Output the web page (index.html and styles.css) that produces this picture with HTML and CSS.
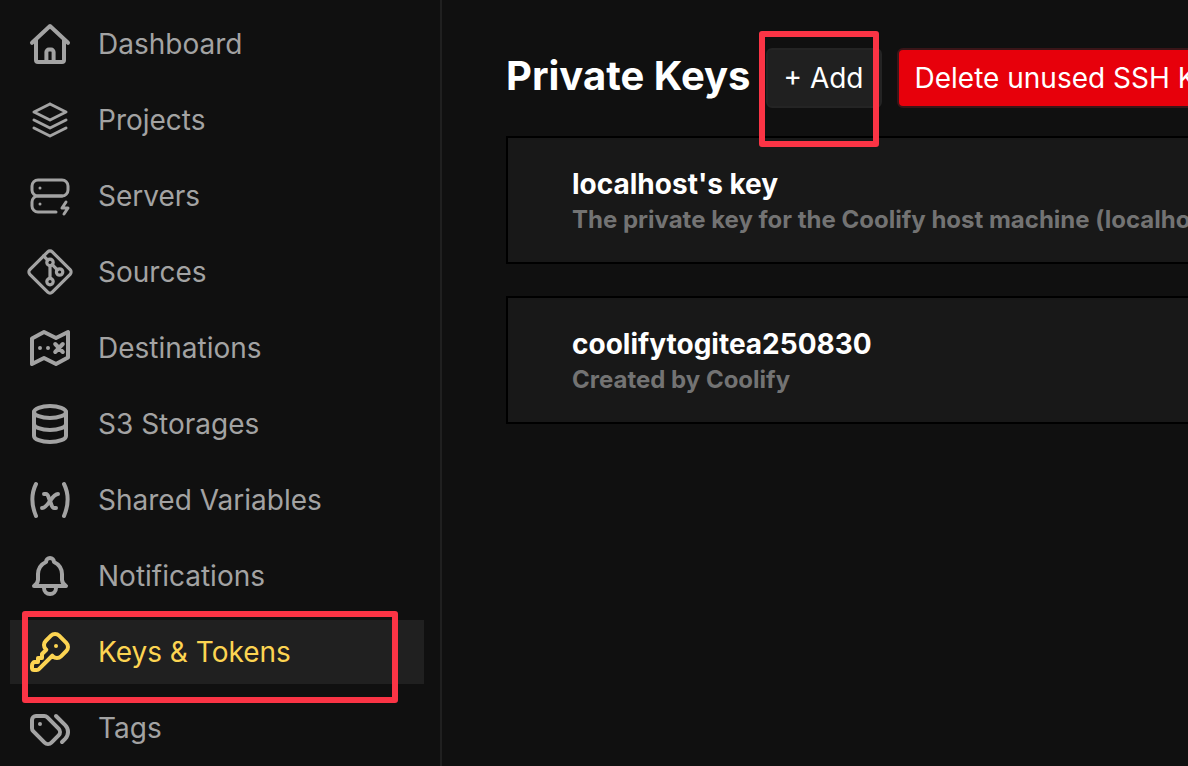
FILE: index.html
```html
<!DOCTYPE html>
<html lang="en">
  <head>
    <meta charset="UTF-8" />
    <meta name="viewport" content="width=device-width, initial-scale=1.0" />
    <title>Private Keys | Coolify</title>
    <link rel="stylesheet" href="styles.css">
  </head>
  <body>
    <aside class="sidebar">
      <nav>
        <ul class="menu">
          <li>
            <a href="#" class="menu-item">
              <svg class="icon" viewBox="0 0 24 24">
                <path d="M3 11.4l9-8.4l9 8.4M5 10v10a1 1 0 0 0 1 1h12a1 1 0 0 0 1-1v-10" />
                <path d="M10.2 21v-5a1.2 1.2 0 0 1 1.2-1.2h1.2a1.2 1.2 0 0 1 1.2 1.2v5" />
              </svg>
              Dashboard
            </a>
          </li>
          <li>
            <a href="#" class="menu-item">
              <svg class="icon icon-thin" viewBox="0 0 24 24">
                <path d="M12 4l-8 4l8 4l8-4l-8-4M4 12l8 4l8-4M4 16l8 4l8-4" />
              </svg>
              Projects
            </a>
          </li>
          <li>
            <a href="#" class="menu-item">
              <svg class="icon icon-thin" viewBox="0 0 24 24">
                <path d="M3 7a3 3 0 0 1 3-3h12a3 3 0 0 1 3 3v2a3 3 0 0 1-3 3h-12a3 3 0 0 1-3-3z" />
                <path d="M15 20h-9a3 3 0 0 1-3-3v-2a3 3 0 0 1 3-3h12M7 8v.01M7 16v.01M20 15l-2 3h3l-2 3" />
              </svg>
              Servers
            </a>
          </li>
          <li>
            <a href="#" class="menu-item">
              <svg class="icon icon-git" viewBox="0 0 15 15">
                <path d="M6.793 1.207L1.207 6.793a1 1 0 0 0 0 1.414l5.586 5.586a1 1 0 0 0 1.414 0l5.586-5.586a1 1 0 0 0 0-1.414L8.207 1.207a1 1 0 0 0-1.414 0z" />
                <path d="M5.5 2.5l1.3 1.3M8.2 5.2l1.6 1.6M7.5 5.5v4" />
                <circle cx="7.5" cy="4.5" r="1" />
                <circle cx="10.5" cy="7.5" r="1" />
                <circle cx="7.5" cy="10.5" r="1" />
              </svg>
              Sources
            </a>
          </li>
          <li>
            <a href="#" class="menu-item">
              <svg class="icon" viewBox="0 0 24 24">
                <path d="M3 7.2l6-3.2l6 3l6-3v12.8l-6 3.2l-6-3l-6 3z" />
                <path d="M7 12v.01M11 12v.01M14.6 10l3.8 4M18.4 10l-3.8 4" />
              </svg>
              Destinations
            </a>
          </li>
          <li>
            <a href="#" class="menu-item">
              <svg class="icon" viewBox="0 0 24 24">
                <ellipse cx="12" cy="6" rx="8" ry="3" />
                <path d="M4 6v6a8 3 0 0 0 16 0v-6M4 12v6a8 3 0 0 0 16 0v-6" />
              </svg>
              S3 Storages
            </a>
          </li>
          <li>
            <a href="#" class="menu-item">
              <svg class="icon" viewBox="0 0 24 24">
                <path d="M5 4c-2.5 5-2.5 10 0 16m14-16c2.5 5 2.5 10 0 16m-10-11h1c1 0 1 1 2.016 3.527c.984 2.473.984 3.473 1.984 3.473h1" />
                <path d="M8 16c1.5 0 3-2 4-3.5s2.5-3.5 4-3.5" />
              </svg>
              Shared Variables
            </a>
          </li>
          <li>
            <a href="#" class="menu-item">
              <svg class="icon" viewBox="0 0 24 24">
                <path d="M10 5a2 2 0 1 1 4 0a7 7 0 0 1 4 6v3a4 4 0 0 0 2 3h-16a4 4 0 0 0 2-3v-3a7 7 0 0 1 4-6M9 17v1a3 3 0 0 0 6 0v-1" />
              </svg>
              Notifications
            </a>
          </li>
          <li>
            <a href="#" class="menu-item menu-item-active">
              <svg class="icon" viewBox="0 0 24 24">
                <path d="M16.555 3.843l3.602 3.602a2.877 2.877 0 0 1 0 4.069l-2.643 2.643a2.877 2.877 0 0 1-4.069 0l-.301-.301l-6.558 6.558a2 2 0 0 1-1.239.578l-.175.008h-1.172a1 1 0 0 1-.993-.883l-.007-.117v-1.172a2 2 0 0 1 .467-1.284l.119-.13l.414-.414h2v-2h2v-2l2.144-2.144l-.301-.301a2.877 2.877 0 0 1 0-4.069l2.643-2.643a2.877 2.877 0 0 1 4.069 0zM15 9h.01" />
              </svg>
              Keys &amp; Tokens
              <span class="marker marker-menu"></span>
            </a>
          </li>
          <li>
            <a href="#" class="menu-item">
              <svg class="icon" viewBox="0 0 24 24">
                <path d="M3 8v4.172a2 2 0 0 0 .586 1.414l5.71 5.71a2.41 2.41 0 0 0 3.408 0l3.592-3.592a2.41 2.41 0 0 0 0-3.408l-5.71-5.71a2 2 0 0 0-1.414-.586h-4.172a2 2 0 0 0-2 2z" />
                <path d="M18 19l1.592-1.592a4.82 4.82 0 0 0 0-6.816l-4.592-4.592M7 10h-.01" />
              </svg>
              Tags
            </a>
          </li>
        </ul>
      </nav>
    </aside>
    <main>
      <div class="page-header">
        <h1>Private Keys</h1>
        <div class="add-wrap">
          <button type="button" class="btn">+ Add</button>
          <span class="marker marker-add"></span>
        </div>
        <button type="button" class="btn btn-danger">Delete unused SSH Keys</button>
      </div>
      <div class="key-list">
        <a href="#" class="card">
          <span class="card-title">localhost's key</span>
          <span class="card-text">The private key for the Coolify host machine (localhost).</span>
        </a>
        <a href="#" class="card">
          <span class="card-title">coolifytogitea250830</span>
          <span class="card-text">Created by Coolify</span>
        </a>
      </div>
    </main>
  </body>
</html>
```

FILE: styles.css
```css
* {
  box-sizing: border-box;
}

body {
  margin: 0;
  height: 100vh;
  display: flex;
  overflow: hidden;
  background-color: #101010;
  color: #fff;
  font-family: Inter, sans-serif;
  font-size: 28px;
}

a {
  color: inherit;
  text-decoration: none;
}

/* Sidebar */
.sidebar {
  flex: 0 0 442px;
  padding: 12px 16px 12px 10px;
  border-right: 2px solid #202020;
}

.menu {
  list-style: none;
  margin: 0;
  padding: 0;
  display: flex;
  flex-direction: column;
  gap: 12px;
}

.menu-item {
  position: relative;
  display: flex;
  align-items: center;
  gap: 24px;
  height: 64px;
  padding: 0 16px;
  color: #a3a3a3;
}

.menu-item-active {
  background-color: #202020;
  color: #fcd452;
}

.icon {
  flex: none;
  width: 48px;
  height: 48px;
  fill: none;
  stroke: currentColor;
  stroke-width: 2;
  stroke-linecap: round;
  stroke-linejoin: round;
}

.icon-thin {
  stroke-width: 1.5;
}

.icon-git {
  stroke-width: 1;
}

/* Content */
main {
  flex: 1;
  min-width: 0;
  padding: 48px 0 0 64px;
  overflow: hidden;
}

.page-header {
  display: flex;
  align-items: center;
  gap: 15px;
  margin-bottom: 28px;
}

h1 {
  margin: 0;
  font-size: 40px;
  line-height: 56px;
  padding-bottom: 4px;
  white-space: nowrap;
}

.add-wrap {
  position: relative;
}

.btn {
  flex: none;
  height: 60px;
  padding: 0 16px;
  border: 2px solid #242424;
  border-radius: 6px;
  background-color: #202020;
  color: #fff;
  font: inherit;
  white-space: nowrap;
  cursor: pointer;
}

.btn-danger {
  border-color: #3a1518;
  background-color: #e7000b;
}

.key-list {
  display: flex;
  flex-direction: column;
  gap: 32px;
}

.card {
  display: flex;
  flex-direction: column;
  padding: 26px 64px;
  border: 2px solid #000;
  border-right: 0;
  background-color: #181818;
  font-weight: 700;
  white-space: nowrap;
  overflow: hidden;
}

.card-title {
  line-height: 40px;
}

.card-text {
  font-size: 24px;
  line-height: 32px;
  color: #737373;
}

/* Red highlight frames */
.marker {
  position: absolute;
  border: 6px solid #fb3445;
  border-radius: 3px;
  pointer-events: none;
}

.marker-menu {
  top: -9px;
  bottom: -19px;
  left: 12px;
  right: 26px;
}

.marker-add {
  top: -17px;
  bottom: -39px;
  left: -7px;
  right: 3px;
}
```
